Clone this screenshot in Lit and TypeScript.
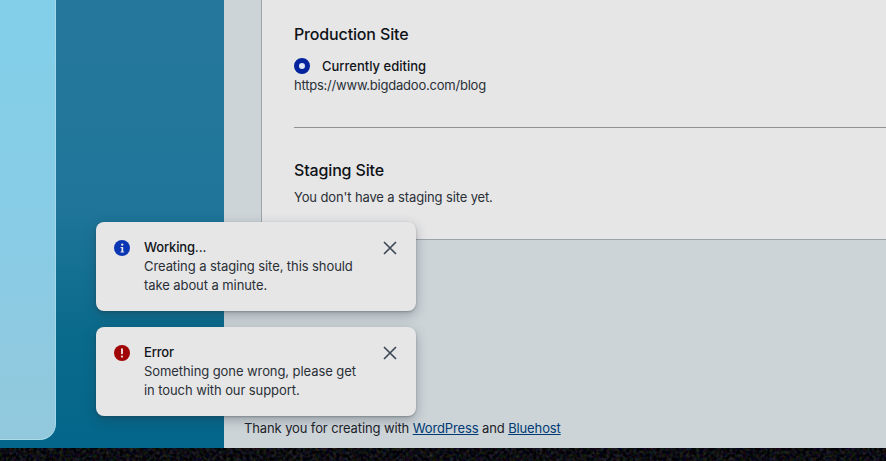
import { LitElement, html, css } from "lit";
import { customElement } from "lit/decorators.js";

@customElement("app-root")
export class AppRoot extends LitElement {
  static styles = css`
    :host { display: block; width: 886px; height: 461px; position: relative; overflow: hidden;
      font-family: Inter, "Liberation Sans", sans-serif; color: #101418; }
    .page { display: flex; flex-direction: column; height: 461px; }
    .main { display: flex; height: 448px; flex: none; }
    .side { width: 224px; flex: none; box-sizing: border-box; padding-bottom: 8px; display: flex; align-items: stretch;
      background: linear-gradient(180deg, #26789b 0%, #1f769a 45%, #0a6a8c 75%, #04668a 100%); }
    .panel { width: 56px; border-radius: 0 0 16px 0; box-sizing: border-box;
      background: linear-gradient(180deg, #82cfe9 0%, #88cce6 50%, #92c8dc 100%);
      border-right: 1px solid #a4d8ea; border-bottom: 1px solid #a9dbe9; }
    .content { flex: 1; min-width: 0; background: #ccd4d8; padding-left: 37px; display: flex; flex-direction: column; }
    .card { height: 240px; box-sizing: border-box; background: #e6e6e7; padding: 24px 0 0 32px;
      border-left: 1px solid #9ea5a9; border-bottom: 1px solid #9ea5a9; flex: none; }
    h2 { margin: 0; font-size: 16px; line-height: 20px; font-weight: 500; letter-spacing: -0.15px; color: #0e1216; }
    .status { display: flex; align-items: center; gap: 12px; margin-top: 12px; height: 19px;
      font-size: 13px; font-weight: 500; color: #101418; }
    .radio { width: 16px; height: 16px; box-sizing: border-box; border-radius: 50%; border: 5px solid #03249c; background: #dfe6f3; }
    .url { margin-top: 1px; font-size: 13px; line-height: 19px; color: #2a3036; letter-spacing: -0.22px; }
    hr { border: 0; height: 1px; background: #8f9295; margin: 32px 0 0 0; }
    .staging { margin-top: 32px; }
    .none { margin-top: 8px; font-size: 13px; line-height: 19px; letter-spacing: -0.13px; color: #2a3036; }
    .foot { margin: auto 0 10px -17px; font-size: 13px; line-height: 20px; color: #1c2228; letter-spacing: -0.12px; }
    .foot a { color: #003a75; text-decoration: underline; }
    .noise { height: 13px; flex: none; display: block; width: 100%; background: #0b0c08; }
    .toasts { position: absolute; left: 96px; top: 222px; width: 320px; display: flex; flex-direction: column; gap: 16px; }
    .toast { height: 89px; box-sizing: border-box; background: #e6e6e7; border-radius: 8px; padding: 16px 18px;
      display: flex; box-shadow: 0 4px 12px rgba(40,50,60,.32), 0 1px 2px rgba(40,50,60,.3); }
    .ico { width: 16px; height: 16px; flex: none; margin-top: 2px; }
    .body { margin-left: 14px; width: 220px; flex: none; font-size: 13px; line-height: 19px; color: #2a3036; letter-spacing: -0.08px; }
    .title { font-weight: 500; color: #101418; letter-spacing: -0.15px; }
    .x { width: 16px; height: 16px; margin-left: 18px; margin-top: 2px; flex: none; }
  `;

  private toast(icon: unknown, title: string, text: unknown) {
    return html`<div class="toast">
      ${icon}
      <div class="body"><div class="title">${title}</div>${text}</div>
      <svg class="x" viewBox="0 0 16 16"><path d="M2 2 L14 14 M14 2 L2 14" stroke="#3f4a57" stroke-width="1.7" fill="none"/></svg>
    </div>`;
  }

  render() {
    const info = html`<svg class="ico" viewBox="0 0 16 16"><circle cx="8" cy="8" r="8" fill="#0a36b4"/><circle cx="8.2" cy="4.6" r="1.2" fill="#e6e6e7"/><path d="M6.6 7h2.6v4.4h.9v1H6.6v-1h.9V8h-.9z" fill="#e6e6e7"/></svg>`;
    const err = html`<svg class="ico" viewBox="0 0 16 16"><circle cx="8" cy="8" r="8" fill="#a00606"/><rect x="7" y="3.2" width="2" height="6" rx=".9" fill="#e8d8d8"/><circle cx="8" cy="11.6" r="1.15" fill="#e8d8d8"/></svg>`;
    return html`
      <div class="page">
        <div class="main">
          <div class="side"><div class="panel"></div></div>
          <div class="content">
            <div class="card">
              <h2>Production Site</h2>
              <div class="status"><span class="radio"></span>Currently editing</div>
              <div class="url">https://www.bigdadoo.com/blog</div>
              <hr />
              <h2 class="staging">Staging Site</h2>
              <div class="none">You don't have a staging site yet.</div>
            </div>
            <div class="foot">Thank you for creating with <a href="#">WordPress</a> and <a href="#">Bluehost</a></div>
          </div>
        </div>
        <svg class="noise" width="886" height="13">
          <filter id="n" x="0" y="0" width="100%" height="100%" color-interpolation-filters="sRGB"><feTurbulence type="fractalNoise" baseFrequency="0.3" numOctaves="2" seed="4"/>
            <feColorMatrix values="0.3 0.12 0 0 -0.16  0.12 0.3 0 0 -0.16  0.1 0.1 0.3 0 -0.18  0 0 0 0 1"/></filter>
          <rect width="886" height="13" filter="url(#n)"/>
        </svg>
      </div>
      <div class="toasts">
        ${this.toast(info, "Working...", "Creating a staging site, this should take about a minute.")}
        ${this.toast(err, "Error", "Something gone wrong, please get in touch with our support.")}
      </div>`;
  }
}
